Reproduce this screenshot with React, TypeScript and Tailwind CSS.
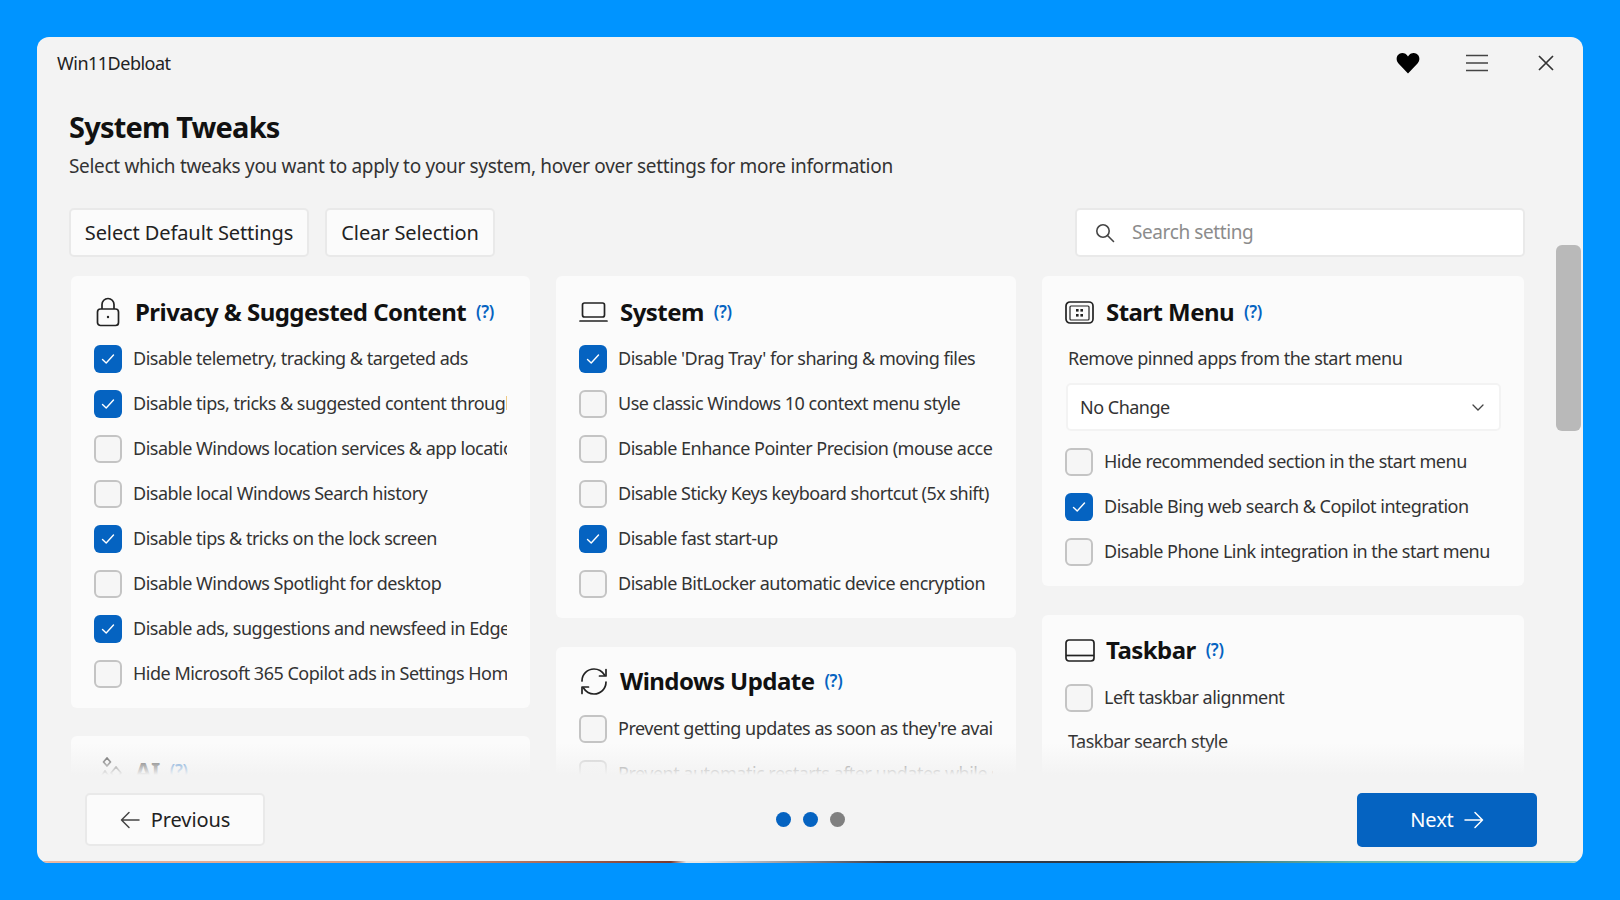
import React from "react";

const font = { fontFamily: '"Noto Sans", "Open Sans", sans-serif' };

function Check({ on }: { on?: boolean }) {
  return on ? (
    <span className="flex h-[28px] w-[28px] shrink-0 items-center justify-center rounded-[6px] bg-[#0563c1]">
      <svg width="16" height="16" viewBox="0 0 16 16" fill="none" stroke="#fff" strokeWidth="1.4" strokeLinecap="round" strokeLinejoin="round">
        <path d="M2.5 8.5 6.2 12 13.5 4" />
      </svg>
    </span>
  ) : (
    <span className="h-[28px] w-[28px] shrink-0 rounded-[6px] border-2 border-[#c4c4c4] bg-[#f6f6f6]" />
  );
}

function Row({ label, on }: { label: string; on?: boolean }) {
  return (
    <div className="flex h-[45px] items-center gap-[11px]">
      <Check on={on} />
      <span className="min-w-0 flex-1 overflow-hidden whitespace-nowrap text-[18px] tracking-[-0.5px] text-[#333]">{label}</span>
    </div>
  );
}

function Header({ icon, title }: { icon: React.ReactNode; title: string }) {
  return (
    <div className="flex h-[48px] items-center">
      <span className="flex w-[41px] shrink-0 items-center">{icon}</span>
      <span className="text-[24px] font-bold tracking-[-0.55px] text-[#111]">{title}</span>
      <span className="ml-[10px] text-[17px] font-semibold tracking-[-0.3px] text-[#0563c1]">(?)</span>
    </div>
  );
}

const LockIcon = (
  <svg width="28" height="30" viewBox="0 0 28 30" fill="none" stroke="#222" strokeWidth="1.7">
    <rect x="3.5" y="12" width="21" height="16.5" rx="3" />
    <path d="M8 12V7.5a6 6 0 0 1 12 0V12" />
    <circle cx="14" cy="20" r="1.2" fill="#222" stroke="none" />
  </svg>
);
const LaptopIcon = (
  <svg width="29" height="22" viewBox="0 0 29 22" fill="none" stroke="#222" strokeWidth="1.7">
    <rect x="3.5" y="2" width="22" height="14" rx="2" />
    <path d="M1 20h27" strokeLinecap="round" />
  </svg>
);
const StartIcon = (
  <svg width="29" height="23" viewBox="0 0 29 23" fill="none" stroke="#222" strokeWidth="1.7">
    <rect x="1" y="1" width="27" height="21" rx="4" />
    <rect x="5" y="5" width="19" height="14" rx="1" strokeWidth="1.2" />
    <g fill="#222" stroke="none">
      <rect x="11" y="8" width="2.6" height="2.6" />
      <rect x="15.4" y="8" width="2.6" height="2.6" />
      <rect x="11" y="13" width="2.6" height="2.6" />
      <rect x="15.4" y="13" width="2.6" height="2.6" />
    </g>
  </svg>
);
const TaskbarIcon = (
  <svg width="30" height="23" viewBox="0 0 30 23" fill="none" stroke="#222" strokeWidth="1.7">
    <rect x="1" y="1" width="28" height="21" rx="3" />
    <path d="M1 16.5h28" />
  </svg>
);
const RefreshIcon = (
  <svg width="30" height="31" viewBox="0 0 30 31" fill="none" stroke="#222" strokeWidth="1.7" strokeLinecap="round" strokeLinejoin="round">
    <path d="M3 15C3 8 8.500 3 15 3c4.500 0 8 2 10.500 6" />
    <path d="M27 3.500V10h-6.500" />
    <path d="M27 16c0 7-5.500 12-12 12-4.500 0-8-2-10.500-6" />
    <path d="M3 27.500V21h6.500" />
  </svg>
);
const AiIcon = (
  <svg width="26" height="28" viewBox="0 0 26 28" fill="none" stroke="#222" strokeWidth="1.7" strokeLinejoin="round" className="ml-[4px]">
    <path d="M9 1l3.500 4L9 9 5.500 5z" />
    <path d="M18 10l5 6-5 6-5-6z" />
    <path d="M7 14l3 4-3 4-3-4z" />
  </svg>
);

function Card({ children, className }: { children: React.ReactNode; className?: string }) {
  return <section className={"shrink-0 rounded-[6px] bg-[#fbfbfb] " + (className ?? "")}>{children}</section>;
}

function Btn({ children, className }: { children: React.ReactNode; className?: string }) {
  return (
    <button className={"flex items-center justify-center rounded-[5px] border-2 border-[#e9e9e9] bg-[#fbfbfb] text-[20px] tracking-[-0.1px] text-[#222] " + (className ?? "")}>
      {children}
    </button>
  );
}

export default function App() {
  return (
    <div className="flex h-[900px] w-[1620px] items-start overflow-hidden bg-[#0094ff] pl-[37px] pt-[37px]" style={font}>
      <div className="relative flex h-[826px] w-[1546px] flex-col overflow-hidden rounded-[12px] bg-[#f3f3f3]">
        <header className="flex h-[52px] shrink-0 items-center pl-[20px] pr-[28px]">
          <span className="flex-1 text-[18px] tracking-[-0.5px] text-[#222]">Win11Debloat</span>
          <svg width="24" height="22" viewBox="0 0 24 22" fill="#000" className="mr-[45px]">
            <path d="M12 21.500 2.500 11.500C-.5 8.300.3 3.500 3.500 1.800c3-1.500 6.500-.5 8.500 2.700 2-3.200 5.500-4.200 8.500-2.700 3.200 1.700 4 6.500 1 9.700z" />
          </svg>
          <svg width="24" height="18" viewBox="0 0 24 18" stroke="#444" strokeWidth="1.7" className="mr-[48px]">
            <path d="M1 1.500h22M1 9h22M1 16.500h22" />
          </svg>
          <svg width="18" height="18" viewBox="0 0 18 18" stroke="#333" strokeWidth="1.7">
            <path d="M2 2l14 14M16 2 2 16" />
          </svg>
        </header>

        <div className="shrink-0 pl-[32px]">
          <h1 className="mt-[18px] text-[29px] font-bold leading-[40px] tracking-[-0.8px] text-[#111]">System Tweaks</h1>
          <p className="mt-[5px] text-[19px] leading-[28px] tracking-[-0.32px] text-[#333]">
            Select which tweaks you want to apply to your system, hover over settings for more information
          </p>
        </div>

        <div className="mt-[28px] flex h-[49px] shrink-0 items-stretch pl-[32px] pr-[58px]">
          <Btn className="w-[240px]">Select Default Settings</Btn>
          <Btn className="ml-[16px] w-[170px]">Clear Selection</Btn>
          <div className="ml-auto flex w-[450px] items-center rounded-[5px] border-2 border-[#e9e9e9] bg-white pl-[18px]">
            <svg width="20" height="20" viewBox="0 0 20 20" fill="none" stroke="#444" strokeWidth="1.6" strokeLinecap="round">
              <circle cx="8" cy="8" r="6.200" />
              <path d="m12.500 12.500 6 6" />
            </svg>
            <span className="ml-[17px] text-[19px] tracking-[-0.4px] text-[#8c8c8c]">Search setting</span>
          </div>
        </div>

        <div className="relative mt-[19px] flex min-h-0 flex-1 overflow-hidden pl-[34px]">
          <div className="flex w-[459px] shrink-0 flex-col gap-[28px]">
            <Card className="h-[432px] pl-[23px] pr-[23px] pt-[12px]">
              <Header icon={LockIcon} title="Privacy & Suggested Content" />
              <div>
                <Row on label="Disable telemetry, tracking & targeted ads" />
                <Row on label="Disable tips, tricks & suggested content through" />
                <Row label="Disable Windows location services & app location" />
                <Row label="Disable local Windows Search history" />
                <Row on label="Disable tips & tricks on the lock screen" />
                <Row label="Disable Windows Spotlight for desktop" />
                <Row on label="Disable ads, suggestions and newsfeed in Edge" />
                <Row label="Hide Microsoft 365 Copilot ads in Settings Home" />
              </div>
            </Card>
            <Card className="h-[200px] pl-[23px] pr-[23px] pt-[11px]">
              <Header icon={AiIcon} title="AI" />
            </Card>
          </div>

          <div className="ml-[26px] flex w-[460px] shrink-0 flex-col gap-[29px]">
            <Card className="h-[342px] pl-[23px] pr-[23px] pt-[12px]">
              <Header icon={LaptopIcon} title="System" />
              <div>
                <Row on label="Disable 'Drag Tray' for sharing & moving files" />
                <Row label="Use classic Windows 10 context menu style" />
                <Row label="Disable Enhance Pointer Precision (mouse acceleration)" />
                <Row label="Disable Sticky Keys keyboard shortcut (5x shift)" />
                <Row on label="Disable fast start-up" />
                <Row label="Disable BitLocker automatic device encryption" />
              </div>
            </Card>
            <Card className="h-[300px] pl-[23px] pr-[23px] pt-[10px]">
              <Header icon={RefreshIcon} title="Windows Update" />
              <div className="mt-[1px]">
                <Row label="Prevent getting updates as soon as they're available" />
                <Row label="Prevent automatic restarts after updates while signed in" />
              </div>
            </Card>
          </div>

          <div className="ml-[26px] flex w-[482px] shrink-0 flex-col gap-[29px]">
            <Card className="h-[310px] pl-[23px] pr-[23px] pt-[12px]">
              <Header icon={StartIcon} title="Start Menu" />
              <p className="mt-[9px] pl-[3px] text-[18px] leading-[26px] tracking-[-0.5px] text-[#333]">Remove pinned apps from the start menu</p>
              <div className="ml-[1px] mt-[12px] flex h-[48px] items-center justify-between rounded-[5px] border-2 border-[#f3f3f3] bg-white pl-[12px] pr-[14px] text-[18px] tracking-[-0.5px] text-[#333]">
                <span>No Change</span>
                <svg width="14" height="14" viewBox="0 0 14 14" fill="none" stroke="#444" strokeWidth="1.300" strokeLinecap="round">
                  <path d="m2 5 5 5 5-5" />
                </svg>
              </div>
              <div className="mt-[8px]">
                <Row label="Hide recommended section in the start menu" />
                <Row on label="Disable Bing web search & Copilot integration" />
                <Row label="Disable Phone Link integration in the start menu" />
              </div>
            </Card>
            <Card className="h-[300px] pl-[23px] pr-[23px] pt-[11px]">
              <Header icon={TaskbarIcon} title="Taskbar" />
              <div className="mt-[1px]">
                <Row label="Left taskbar alignment" />
              </div>
              <p className="mt-[8px] pl-[3px] text-[18px] leading-[26px] tracking-[-0.5px] text-[#333]">Taskbar search style</p>
            </Card>
          </div>

          <div className="absolute inset-x-0 bottom-0 h-[32px] bg-gradient-to-b from-[#f3f3f300] to-[#f3f3f3]" />
        </div>

        <footer className="relative flex h-[88px] shrink-0 items-start pl-[48px] pr-[46px] pt-[18px]">
          <Btn className="h-[53px] w-[180px] gap-[11px]">
            <svg width="20" height="18" viewBox="0 0 20 18" fill="none" stroke="#444" strokeWidth="1.500" strokeLinecap="round" strokeLinejoin="round">
              <path d="M19 9H1.500M9 1.500 1.500 9 9 16.500" />
            </svg>
            <span>Previous</span>
          </Btn>
          <div className="mt-[19px] flex flex-1 items-center justify-center gap-[12px] pr-[2px]">
            <span className="h-[15px] w-[15px] rounded-full bg-[#0563c1]" />
            <span className="h-[15px] w-[15px] rounded-full bg-[#0563c1]" />
            <span className="h-[15px] w-[15px] rounded-full bg-[#808080]" />
          </div>
          <button className="flex h-[54px] w-[180px] items-center justify-center gap-[10px] rounded-[5px] bg-[#0563c1] text-[20px] tracking-[-0.1px] text-white">
            <span>Next</span>
            <svg width="20" height="18" viewBox="0 0 20 18" fill="none" stroke="#fff" strokeWidth="1.500" strokeLinecap="round" strokeLinejoin="round">
              <path d="M1 9h17.500M11 1.500 18.500 9 11 16.500" />
            </svg>
          </button>
        </footer>

        <div className="absolute right-[2px] top-[208px] h-[186px] w-[25px] rounded-[6px] bg-[#b9b9b9]" />
        <div className="absolute inset-x-0 bottom-0 h-[2px] bg-[linear-gradient(90deg,#eab9a4_0%,#d99a80_25%,#7a3a30_41%,#e8e8e8_42%,#e8e8e8_43%,#3a3a48_55%,#2a3a4a_70%,#5fb8b0_85%,#8fd0c8_100%)]" />
      </div>
    </div>
  );
}
